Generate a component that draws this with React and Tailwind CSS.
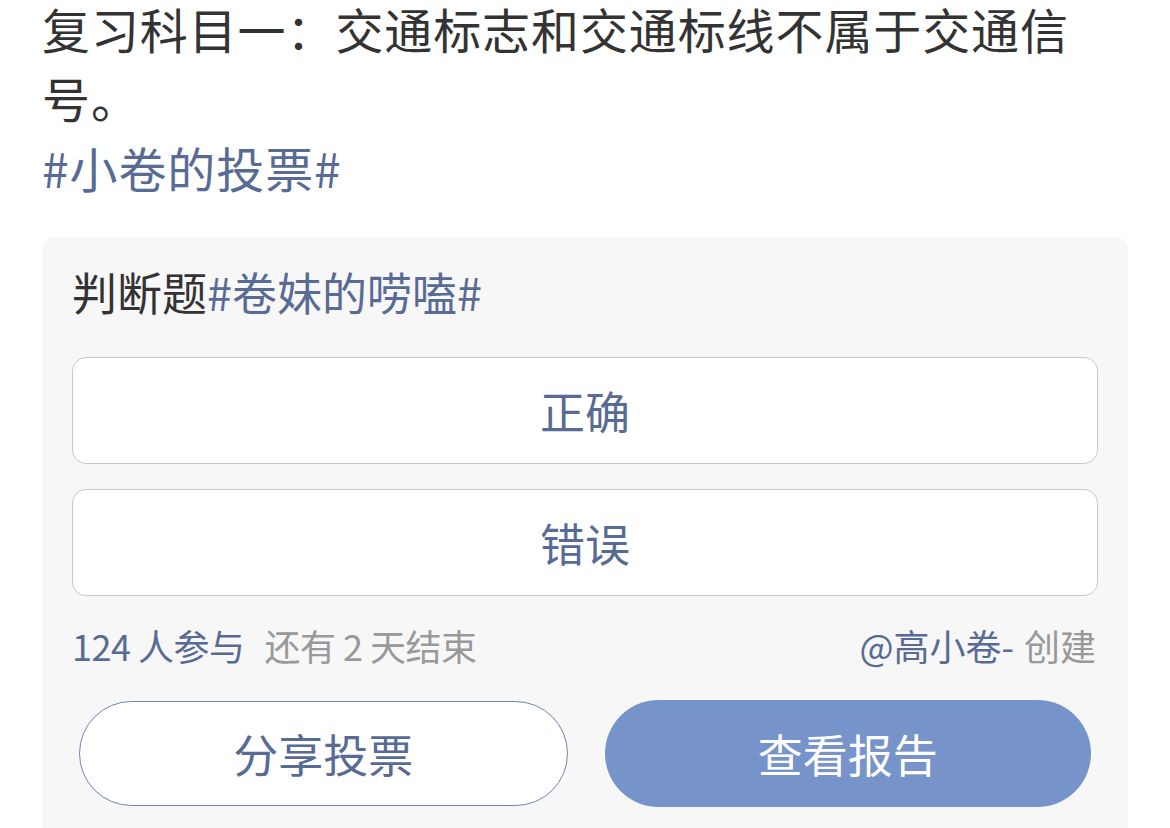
import React from "react";

export default function App() {
  const font = { fontFamily: '"Noto Sans CJK SC", "Noto Sans", sans-serif' };
  return (
    <div className="w-[1170px] h-[828px] overflow-hidden bg-white" style={font}>
      <div className="pl-[42px] pr-[64px] text-[48px] tracking-[0.9px] text-[#333333]">
        <div className="leading-[56px]">复习科目一：交通标志和交通标线不属于交通信</div>
        <div className="mt-[6px] leading-[70px]">号。</div>
        <div className="leading-[70px] text-[#576b95]">#小卷的投票#</div>
      </div>
      <div className="mx-[42px] mt-[35px] rounded-t-[12px] bg-[#f7f7f7] px-[30px] pt-[25px] pb-[40px]">
        <div className="text-[45px] leading-[60px] text-[#333333]">
          判断题<span className="text-[#576b95]">#卷妹的唠嗑#</span>
        </div>
        <div className="mt-[35px] flex flex-col gap-[25px]">
          {["正确", "错误"].map((t) => (
            <div
              key={t}
              className="h-[107px] rounded-[14px] border border-[#c9c9c9] bg-white flex items-center justify-center text-[45px] text-[#576b95]"
            >
              {t}
            </div>
          ))}
        </div>
        <div className="mt-[24px] flex items-center justify-between text-[36px] leading-[50px]">
          <div>
            <span className="text-[#576b95] tracking-[-0.5px]">124 人参与</span>
            <span className="ml-[20px] text-[#999999] tracking-[-0.5px]">还有 2 天结束</span>
          </div>
          <div className="mr-[2px]">
            <span className="text-[#576b95]">@高小卷-</span>
            <span className="ml-[10px] text-[#999999]">创建</span>
          </div>
        </div>
        <div className="mt-[31px] px-[7px] flex gap-[37px]">
          <div className="flex-1 h-[105px] rounded-full border-[1.5px] border-[#6f84ad] bg-white flex items-center justify-center text-[45px] text-[#576b95]">
            分享投票
          </div>
          <div className="flex-1 h-[107px] -mt-[1px] rounded-full bg-[#7694ca] flex items-center justify-center text-[45px] text-white">
            查看报告
          </div>
        </div>
      </div>
    </div>
  );
}
